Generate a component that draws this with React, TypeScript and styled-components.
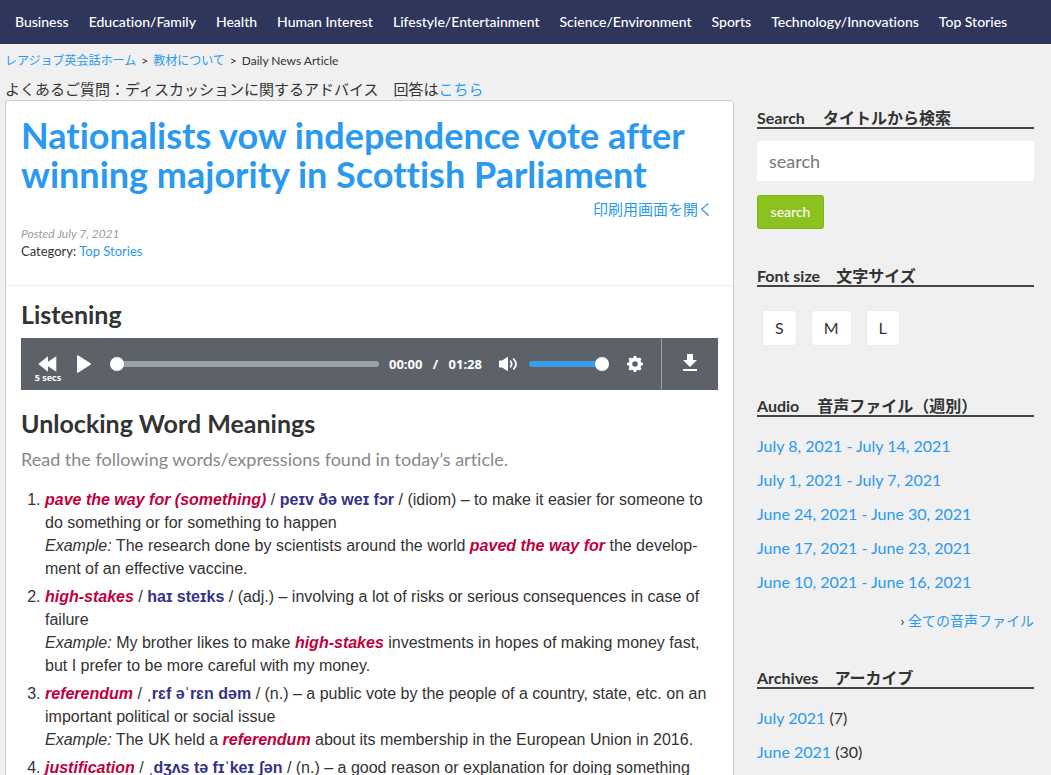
import React from "react";
import styled, { createGlobalStyle } from "styled-components";

const LATO = `Lato, "Noto Sans CJK JP", sans-serif`;
const LINK = "#2a99f0";

const GlobalStyle = createGlobalStyle`
  *, *::before, *::after { box-sizing: border-box; }
  body {
    margin: 0;
    background: #f0f0f0;
    color: #333;
    font-family: ${LATO};
    font-size: 16px;
    font-variant-ligatures: none;
    line-height: 24px;
  }
  h1, h2, h3, p, ul, ol { margin: 0; padding: 0; font-weight: inherit; }
  a { color: ${LINK}; text-decoration: none; }
  button { font-family: inherit; cursor: pointer; }
`;

const Page = styled.div`
  height: 100vh;
  overflow: hidden;
`;

const NavBar = styled.nav`
  height: 44px;
  background: #2f365c;
  padding: 0 5px;
`;

const NavList = styled.ul`
  display: flex;
  list-style: none;
`;

const NavLink = styled.a`
  display: block;
  padding: 0 10px;
  color: #fff;
  font-size: 14px;
  font-weight: 500;
  line-height: 44px;
  white-space: nowrap;
`;

const Columns = styled.div`
  display: grid;
  grid-template-columns: minmax(0, 729fr) minmax(0, 277fr);
  column-gap: 23px;
  padding: 0 17px 0 5px;
`;

const Breadcrumb = styled.nav`
  display: flex;
  gap: 5px;
  margin-top: 6px;
  font-size: 12px;
  line-height: 22px;
`;

const Faq = styled.p`
  margin-top: 6px;
  font-size: 15px;
  line-height: 22px;
`;

const Card = styled.article`
  background: #fff;
  border: 1px solid #ccc;
  border-radius: 3px;
`;

const CardHead = styled.header`
  padding: 15px 15px 25px;
  border-bottom: 1px solid #eee;
`;

const Title = styled.h1`
  color: ${LINK};
  font-size: 36px;
  font-weight: 700;
  line-height: 39px;
`;

const PrintLine = styled.p`
  padding-right: 5px;
  text-align: right;
  font-size: 15px;
  line-height: 30px;
`;

const Posted = styled.p`
  margin-top: 1px;
  color: #9b9ba5;
  font-size: 12px;
  font-style: italic;
  line-height: 17px;
`;

const Category = styled.p`
  font-size: 13px;
  line-height: 18px;
`;

const CardBody = styled.div`
  padding: 13px 15px;
`;

const SectionTitle = styled.h2`
  font-size: 25px;
  font-weight: 700;
  line-height: 30px;
`;

const Player = styled.div`
  display: flex;
  align-items: center;
  height: 52px;
  margin: 9px 0 18px;
  padding-left: 9px;
  background: #5d6269;
  color: #fff;
`;

const IconButton = styled.button<{ $width: number }>`
  display: flex;
  flex: none;
  flex-direction: column;
  align-items: center;
  justify-content: center;
  width: ${(p) => p.$width}px;
  height: 52px;
  padding: 0;
  border: 0;
  background: none;
  color: #fff;
`;

const RewindLabel = styled.span`
  height: 10px;
  margin-bottom: -10px;
  font-family: "Open Sans", sans-serif;
  font-size: 9px;
  font-weight: 700;
  line-height: 12px;
`;

const Slider = styled.input<{ $track: string }>`
  appearance: none;
  min-width: 0;
  height: 14px;
  margin: 0;
  background: none;
  &::-webkit-slider-runnable-track {
    height: 6px;
    border-radius: 3px;
    background: ${(p) => p.$track};
  }
  &::-webkit-slider-thumb {
    appearance: none;
    width: 14px;
    height: 14px;
    margin-top: -4px;
    border-radius: 50%;
    background: #fff;
  }
`;

const SeekSlider = styled(Slider)`
  flex: 1;
  margin: 0 10px 0 8px;
`;

const VolumeSlider = styled(Slider)`
  width: 80px;
  margin: 0 9px 0 11px;
`;

const Time = styled.div`
  display: flex;
  justify-content: space-between;
  width: 93px;
  margin-right: 16px;
  font-family: "Open Sans", sans-serif;
  font-size: 13px;
  font-weight: 700;
  line-height: 20px;
`;

const DownloadBox = styled.div`
  margin-left: 9px;
  border-left: 1px solid #9aa3a9;
`;

const Lead = styled.p`
  margin-top: 6px;
  color: #888;
  font-size: 18px;
  line-height: 30px;
`;

const WordList = styled.ol`
  margin-top: 14px;
  padding-left: 24px;
  font-family: "Liberation Sans", Arial, sans-serif;
  font-size: 16px;
  line-height: 23px;
`;

const WordItem = styled.li`
  margin-bottom: 5px;
`;

const Example = styled.p`
  line-height: 23px;
`;

const Term = styled.strong`
  color: #c0003c;
  font-style: italic;
`;

const Ipa = styled.strong`
  color: #333388;
`;

const Side = styled.aside`
  padding-top: 62px;
`;

const SideTitle = styled.h3<{ $gap: number }>`
  display: flex;
  align-items: flex-end;
  gap: ${(p) => p.$gap}px;
  height: 23px;
  border-bottom: 2px solid #444;
  font-size: 16px;
  font-weight: 700;
  line-height: 20px;
  white-space: nowrap;
`;

const SideLatin = styled.span`
  line-height: 18px;
`;

const SideJapanese = styled.span`
  font-family: "Noto Sans CJK JP", sans-serif;
`;

const SearchForm = styled.form`
  margin: 12px 0 35px;
`;

const SearchInput = styled.input`
  display: block;
  width: 100%;
  height: 40px;
  padding: 0 12px;
  border: 0;
  border-radius: 3px;
  background: #fff;
  color: #333;
  font-family: ${LATO};
  font-size: 18px;
  &::placeholder { color: #777; }
`;

const SearchButton = styled.button`
  width: 67px;
  height: 34px;
  margin-top: 14px;
  padding: 0 0 2px;
  border: 1px solid #7cae1d;
  border-radius: 3px;
  background: #8cc21e;
  color: #fff;
  font-size: 14px;
  font-weight: 500;
`;

const SizeRow = styled.div`
  display: flex;
  gap: 14px;
  margin: 23px 0 48px;
  padding-left: 5px;
`;

const SizeButton = styled.button`
  height: 36px;
  padding: 0 12px 2px;
  border: 1px solid #ebebf0;
  border-radius: 3px;
  background: #fff;
  color: #333;
  font-size: 16px;
`;

const SideList = styled.ul`
  margin-top: 12px;
  list-style: none;
  line-height: 34px;
`;

const AllAudio = styled.p`
  margin: 9px 0 32px;
  text-align: right;
  font-size: 14px;
  line-height: 26px;
`;

const categories = [
  "Business",
  "Education/Family",
  "Health",
  "Human Interest",
  "Lifestyle/Entertainment",
  "Science/Environment",
  "Sports",
  "Technology/Innovations",
  "Top Stories",
];

const audioWeeks = [
  "July 8, 2021 - July 14, 2021",
  "July 1, 2021 - July 7, 2021",
  "June 24, 2021 - June 30, 2021",
  "June 17, 2021 - June 23, 2021",
  "June 10, 2021 - June 16, 2021",
];

const archives = [
  { month: "July 2021", count: 7 },
  { month: "June 2021", count: 30 },
];

const words = [
  {
    term: "pave the way for (something)",
    ipa: "peɪv ðə weɪ fɔr",
    meaning: "(idiom) – to make it easier for someone to do something or for something to happen",
    before: "The research done by scientists around the world ",
    used: "paved the way for",
    after: " the develop\u00adment of an effective vaccine.",
  },
  {
    term: "high-stakes",
    ipa: "haɪ steɪks",
    meaning: "(adj.) – involving a lot of risks or serious consequences in case of failure",
    before: "My brother likes to make ",
    used: "high-stakes",
    after: " investments in hopes of making money fast, but I prefer to be more careful with my money.",
  },
  {
    term: "referendum",
    ipa: "ˌrɛf əˈrɛn dəm",
    meaning: "(n.) – a public vote by the people of a country, state, etc. on an important political or social issue",
    before: "The UK held a ",
    used: "referendum",
    after: " about its membership in the European Union in 2016.",
  },
  {
    term: "justification",
    ipa: "ˌdʒʌs tə fɪˈkeɪ ʃən",
    meaning: "(n.) – a good reason or explanation for doing something",
  },
];

const RewindIcon = () => (
  <svg width="20" height="16" viewBox="0 0 20 16" fill="currentColor" aria-hidden="true">
    <path d="M.3 8L10 .2V5.800L18.300 .2V15.800L10 10.200V15.800Z" />
  </svg>
);

const PlayIcon = () => (
  <svg width="14" height="18" viewBox="0 0 14 18" fill="currentColor" aria-hidden="true">
    <path d="M0 1Q0 -.3 1.300 .4L13.500 8.200Q14.500 9 13.500 9.800L1.300 17.600Q0 18.300 0 17Z" />
  </svg>
);

const SpeakerIcon = () => (
  <svg width="18" height="14" viewBox="0 0 18 14" aria-hidden="true">
    <path fill="currentColor" d="M0 4.200Q0 3.500.7 3.500H3.200L8 .2Q9 -.3 9 .8V13.200Q9 14.300 8 13.800L3.200 10.500H.7Q0 10.500 0 9.800Z" />
    <path fill="none" stroke="currentColor" strokeWidth="1.8" strokeLinecap="round" d="M11.600 4.300Q13.700 7 11.600 9.700M14.700 2.200Q19.300 7 14.700 11.800" />
  </svg>
);

const GearIcon = () => (
  <svg width="16" height="16" viewBox="0 0 16 16" aria-hidden="true">
    <circle cx="8" cy="8" r="4.500" fill="none" stroke="currentColor" strokeWidth="3.400" />
    <g fill="currentColor">
      {[0, 45, 90, 135, 180, 225, 270, 315].map((angle) => (
        <path key={angle} d="M5.700 3L6.900 0H9.100L10.300 3Z" transform={`rotate(${angle} 8 8)`} />
      ))}
    </g>
  </svg>
);

const DownloadIcon = () => (
  <svg width="16" height="20" viewBox="0 0 16 20" fill="currentColor" aria-hidden="true">
    <path d="M5 0H11V6H15L8 13L1 6H5ZM1 15H15V17H1Z" />
  </svg>
);

function AudioPlayer() {
  return (
    <Player role="group" aria-label="Audio player">
      <IconButton type="button" $width={36}>
        <RewindIcon />
        <RewindLabel>5 secs</RewindLabel>
      </IconButton>
      <IconButton type="button" $width={36} aria-label="Play">
        <PlayIcon />
      </IconButton>
      <SeekSlider type="range" aria-label="Seek" min={0} max={88} defaultValue={0} $track="#98a2a8" />
      <Time>
        <span>00:00</span>
        <span>/</span>
        <span>01:28</span>
      </Time>
      <IconButton type="button" $width={20} aria-label="Mute">
        <SpeakerIcon />
      </IconButton>
      <VolumeSlider type="range" aria-label="Volume" min={0} max={10} defaultValue={10} $track="#3a9fe8" />
      <IconButton type="button" $width={34} aria-label="Settings">
        <GearIcon />
      </IconButton>
      <DownloadBox>
        <IconButton type="button" $width={56} aria-label="Download">
          <DownloadIcon />
        </IconButton>
      </DownloadBox>
    </Player>
  );
}

function SideHeading({ en, ja, gap = 16 }: { en: string; ja: string; gap?: number }) {
  return (
    <SideTitle $gap={gap}>
      <SideLatin>{en}</SideLatin>
      <SideJapanese>{ja}</SideJapanese>
    </SideTitle>
  );
}

export default function App() {
  return (
    <Page>
      <GlobalStyle />
      <NavBar aria-label="Categories">
        <NavList>
          {categories.map((name) => (
            <li key={name}>
              <NavLink href="#">{name}</NavLink>
            </li>
          ))}
        </NavList>
      </NavBar>
      <Columns>
        <main>
          <Breadcrumb aria-label="Breadcrumb">
            <a href="#">レアジョブ英会話ホーム</a>
            <span>&gt;</span>
            <a href="#">教材について</a>
            <span>&gt;</span>
            <span>Daily News Article</span>
          </Breadcrumb>
          <Faq>
            よくあるご質問：ディスカッションに関するアドバイス　回答は<a href="#">こちら</a>
          </Faq>
          <Card>
            <CardHead>
              <Title>Nationalists vow independence vote after winning majority in Scottish Parliament</Title>
              <PrintLine>
                <a href="#">印刷用画面を開く</a>
              </PrintLine>
              <Posted>Posted July 7, 2021</Posted>
              <Category>
                Category: <a href="#">Top Stories</a>
              </Category>
            </CardHead>
            <CardBody>
              <SectionTitle>Listening</SectionTitle>
              <AudioPlayer />
              <SectionTitle>Unlocking Word Meanings</SectionTitle>
              <Lead>Read the following words/expressions found in today’s article.</Lead>
              <WordList>
                {words.map((w) => (
                  <WordItem key={w.term}>
                    <Term>{w.term}</Term> / <Ipa>{w.ipa}</Ipa> / {w.meaning}
                    {w.used && (
                      <Example>
                        <em>Example:</em> {w.before}
                        <Term>{w.used}</Term>
                        {w.after}
                      </Example>
                    )}
                  </WordItem>
                ))}
              </WordList>
            </CardBody>
          </Card>
        </main>
        <Side>
          <SideHeading en="Search" ja="タイトルから検索" gap={18} />
          <SearchForm onSubmit={(e) => e.preventDefault()}>
            <SearchInput type="text" aria-label="Search titles" placeholder="search" />
            <SearchButton type="submit">search</SearchButton>
          </SearchForm>
          <SideHeading en="Font size" ja="文字サイズ" />
          <SizeRow>
            {["S", "M", "L"].map((size) => (
              <SizeButton type="button" key={size}>
                {size}
              </SizeButton>
            ))}
          </SizeRow>
          <SideHeading en="Audio" ja="音声ファイル（週別）" gap={18} />
          <SideList>
            {audioWeeks.map((week) => (
              <li key={week}>
                <a href="#">{week}</a>
              </li>
            ))}
          </SideList>
          <AllAudio>
            › <a href="#">全ての音声ファイル</a>
          </AllAudio>
          <SideHeading en="Archives" ja="アーカイブ" />
          <SideList>
            {archives.map((a) => (
              <li key={a.month}>
                <a href="#">{a.month}</a> ({a.count})
              </li>
            ))}
          </SideList>
        </Side>
      </Columns>
    </Page>
  );
}
